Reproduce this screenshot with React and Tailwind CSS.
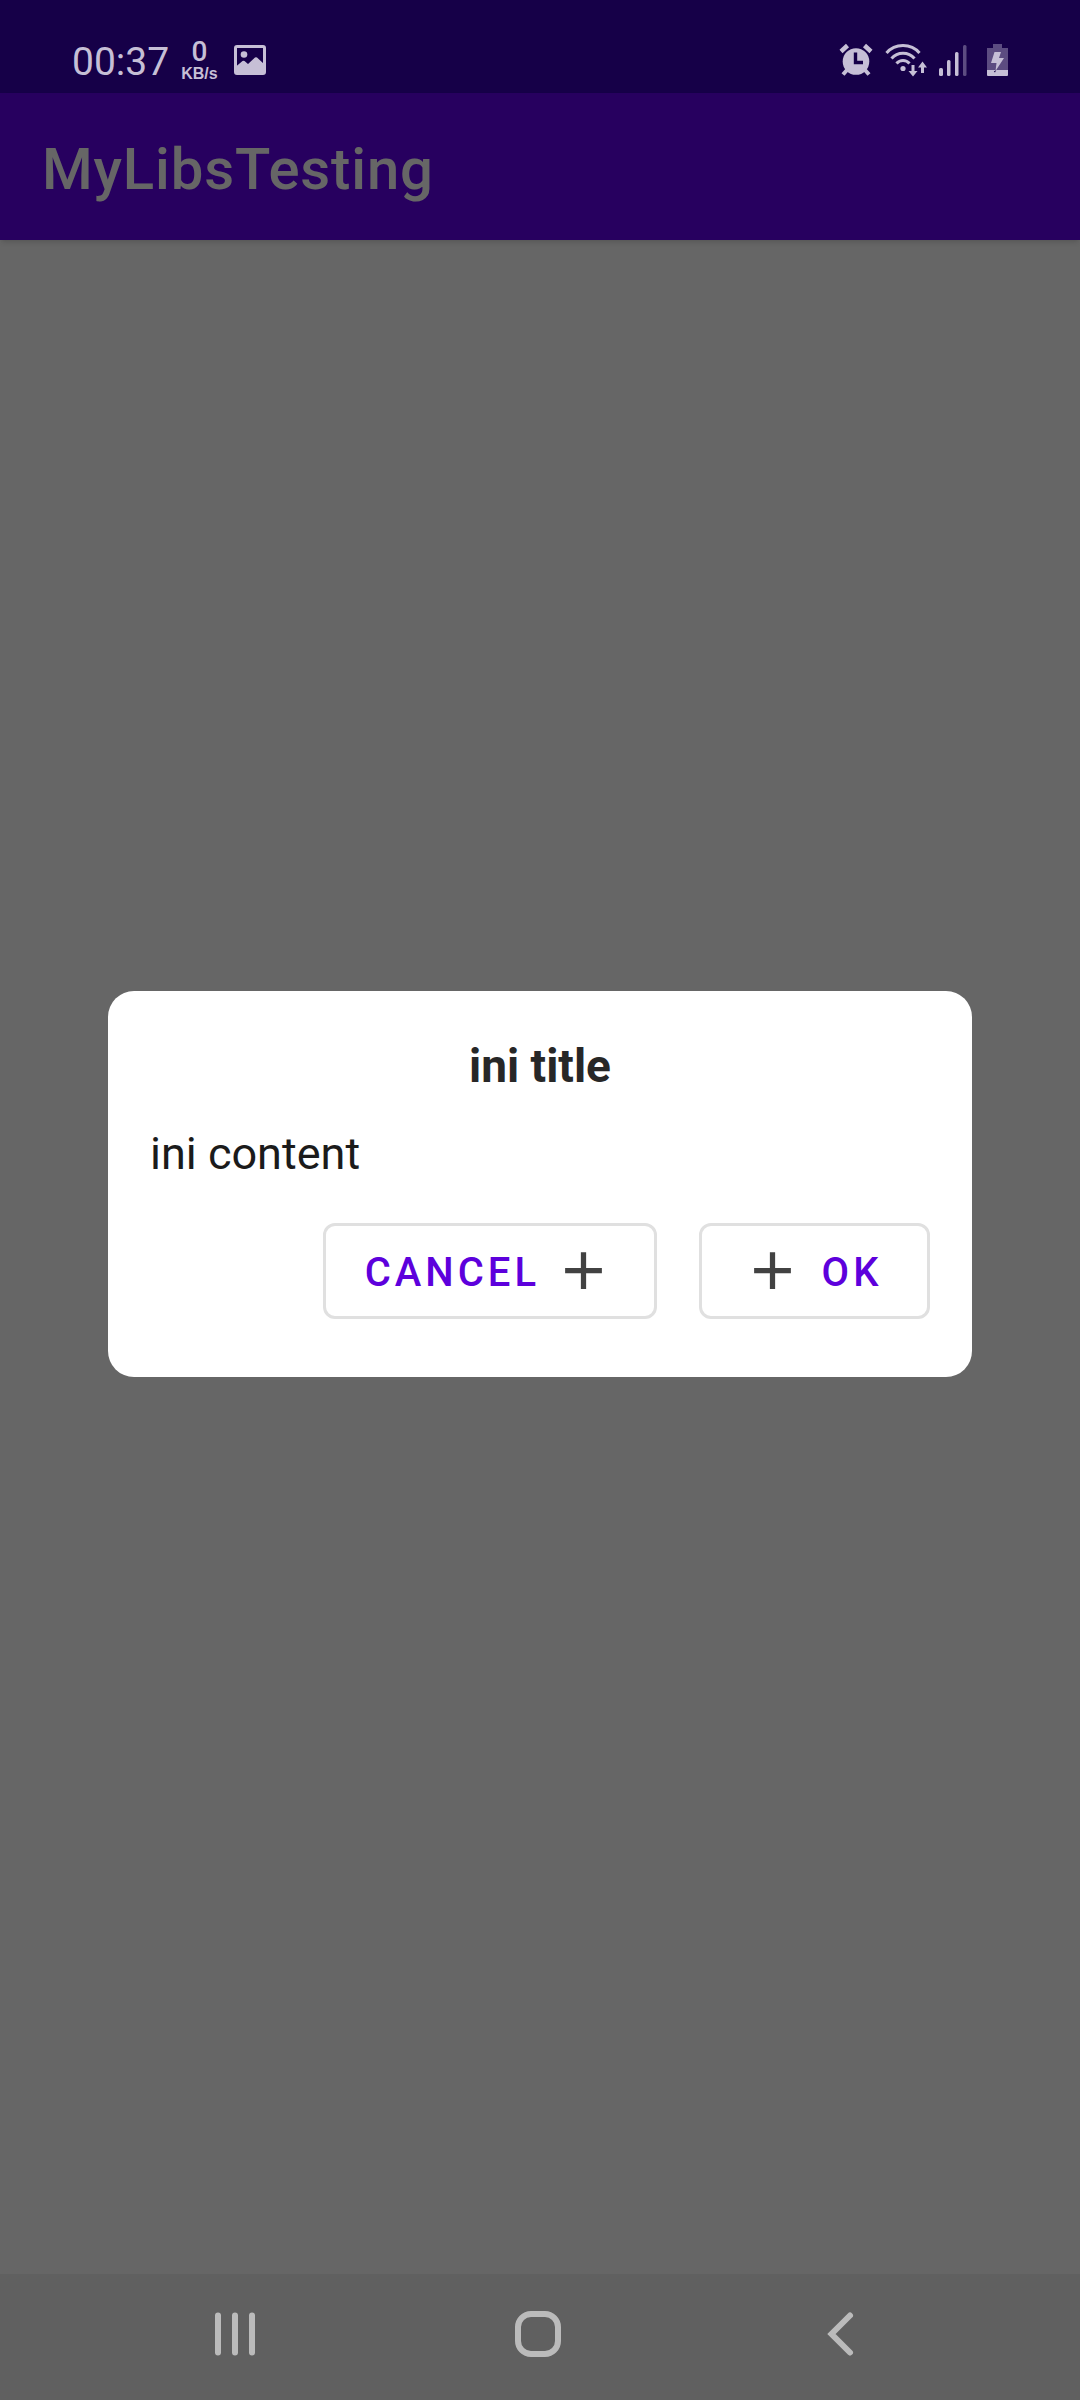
function ImageIcon() {
  return (
    <svg viewBox="0 0 32 30" className="h-[30px] w-8" fill="none" aria-hidden="true">
      <rect x="1.5" y="1.5" width="29" height="27" rx="1.500" stroke="currentColor" strokeWidth="3" />
      <circle cx="10" cy="9.5" r="3.3" fill="currentColor" />
      <path d="M2 21.5 L8.5 16 Q9.5 15.4 10.5 16 L14 19 L21 12.5 Q22 11.8 23 12.5 L30 19 V28.5 H2 Z" fill="currentColor" />
    </svg>
  );
}

function AlarmIcon() {
  return (
    <svg viewBox="0 0 34 34" className="size-[34px]" fill="none" aria-hidden="true">
      <circle cx="17" cy="18.5" r="13.3" fill="currentColor" />
      <path d="M2 8.5 L8.5 2.5 M32 8.5 L25.5 2.5" stroke="currentColor" strokeWidth="4.5" />
      <path d="M8 27 L4 31.5 M26 27 L30 31.5" stroke="currentColor" strokeWidth="4" />
      <path d="M16.5 9.5 V19.5 H24" stroke="#160048" strokeWidth="3.4" />
    </svg>
  );
}

function WifiIcon() {
  return (
    <svg viewBox="0 0 42 34" className="h-[34px] w-[42px]" fill="none" stroke="currentColor" aria-hidden="true">
      <path d="M1.5 10 C10 0 26 0 34.5 10" strokeWidth="3" />
      <path d="M6.5 15.5 C12.500 8.5 23.5 8.5 29.5 15.5" strokeWidth="3" />
      <path d="M11.5 20.5 C15 16.5 21 16.5 24.5 20.5" strokeWidth="3" />
      <circle cx="18" cy="25.5" r="2.6" fill="currentColor" stroke="none" />
      <path d="M28 22 V31 M37.5 30 V21" strokeWidth="3" />
      <path d="M23.5 28 H32.5 L28 33.5 Z M33 24.5 H42 L37.5 18.5 Z" fill="currentColor" stroke="none" />
    </svg>
  );
}

function SignalIcon() {
  return (
    <svg viewBox="0 0 28 34" className="h-[34px] w-7" fill="currentColor" aria-hidden="true">
      <rect x="0" y="25" width="4" height="8" rx="1.5" />
      <rect x="8" y="17" width="3.5" height="16" rx="1.5" />
      <rect x="16" y="9" width="3.5" height="24" rx="1.5" />
      <rect x="24" y="2" width="3.5" height="31" rx="1.5" opacity="0.4" />
    </svg>
  );
}

function BatteryIcon() {
  return (
    <svg viewBox="0 0 21 34" className="h-[34px] w-[21px]" fill="currentColor" aria-hidden="true">
      <path d="M6 1 H15 V5 H21 V27 H0 V5 H6 Z" opacity="0.4" />
      <path d="M0 27 H21 V32 Q21 33 20 33 H1 Q0 33 0 32 Z" />
      <path d="M7.5 9 H14 L12 15 H17 L8.5 28 L9.5 20 H4 Z" />
      <path d="M6.8 28.5 L9.3 27 L8 29.5 Z" fill="#160048" />
    </svg>
  );
}

function PlusIcon() {
  return (
    <svg viewBox="0 0 24 24" className="size-[63px] shrink-0 text-[#424242]" fill="currentColor" aria-hidden="true">
      <path d="M19 13h-6v6h-2v-6H5v-2h6V5h2v6h6v2z" />
    </svg>
  );
}

function OutlinedButton({ children }) {
  return (
    <button
      type="button"
      className="flex h-24 min-w-[231px] items-center gap-3 rounded-xl border-3 border-[#e0e0e0] px-[39px] text-[40px] font-medium tracking-widest text-[#5d00dc]"
    >
      {children}
    </button>
  );
}

function StatusBar() {
  return (
    <div className="flex h-[93px] items-center justify-between bg-[#160048] px-[72px] pt-[26px] text-[#c6bfd6]">
      <div className="flex items-center">
        <span className="pt-1 text-[39px] leading-10">00:37</span>
        <span className="ml-3 flex flex-col items-center font-medium">
          <span className="text-[28px] leading-7">0</span>
          <span className="font-['Liberation_Sans',sans-serif] text-[16px] leading-4 font-bold">KB/s</span>
        </span>
        <span className="ml-4">
          <ImageIcon />
        </span>
      </div>
      <div className="flex items-center">
        <AlarmIcon />
        <span className="ml-3">
          <WifiIcon />
        </span>
        <span className="ml-3">
          <SignalIcon />
        </span>
        <span className="ml-5">
          <BatteryIcon />
        </span>
      </div>
    </div>
  );
}

function Dialog() {
  return (
    <div
      role="dialog"
      aria-labelledby="dialog-title"
      aria-describedby="dialog-content"
      className="w-4/5 rounded-[26px] bg-white px-[42px] pt-12 pb-[58px] leading-[54px]"
    >
      <h2 id="dialog-title" className="text-center text-[46px] font-bold text-[#272727]">
        ini title
      </h2>
      <p id="dialog-content" className="mt-[34px] text-[45px] text-[#1b1b1b]">
        ini content
      </p>
      <div className="mt-[42px] flex justify-end gap-[42px]">
        <OutlinedButton>
          <span className="flex-1 pt-1 text-center">CANCEL</span>
          <PlusIcon />
        </OutlinedButton>
        <OutlinedButton>
          <PlusIcon />
          <span className="flex-1 pt-1 text-center">OK</span>
        </OutlinedButton>
      </div>
    </div>
  );
}

function NavigationBar() {
  return (
    <nav className="flex h-[126px] items-center justify-around bg-[#606060] pr-[88px] pb-1.5 pl-[84px] text-[#bbbbbb]">
      <button type="button" aria-label="Recent apps" className="p-5">
        <svg viewBox="0 0 48 48" className="size-12" fill="none" stroke="currentColor" strokeWidth="6" strokeLinecap="round">
          <path d="M7 5.5 V42.5 M24 5.5 V42.5 M41 5.5 V42.5" />
        </svg>
      </button>
      <button type="button" aria-label="Home" className="p-5">
        <svg viewBox="0 0 48 48" className="size-12" fill="none" stroke="currentColor" strokeWidth="6">
          <rect x="4" y="4" width="40" height="40" rx="13" />
        </svg>
      </button>
      <button type="button" aria-label="Back" className="p-5">
        <svg viewBox="0 0 48 48" className="size-12" fill="none" stroke="currentColor" strokeWidth="6" strokeLinecap="round">
          <path d="M33 5.5 L14.5 24 L33 42.5" />
        </svg>
      </button>
    </nav>
  );
}

export default function App() {
  return (
    <div className="flex min-h-screen flex-col font-[Roboto,sans-serif]">
      <StatusBar />
      <div className="relative flex flex-1 flex-col bg-white">
        <header className="flex h-[147px] items-center bg-[#6200ee] px-[42px] pt-1.5 shadow-md">
          <h1 className="text-[58px] font-medium tracking-[0.015em] text-white">MyLibsTesting</h1>
        </header>
        <div className="absolute inset-0 flex items-center justify-center bg-black/60">
          <Dialog />
        </div>
      </div>
      <NavigationBar />
    </div>
  );
}
